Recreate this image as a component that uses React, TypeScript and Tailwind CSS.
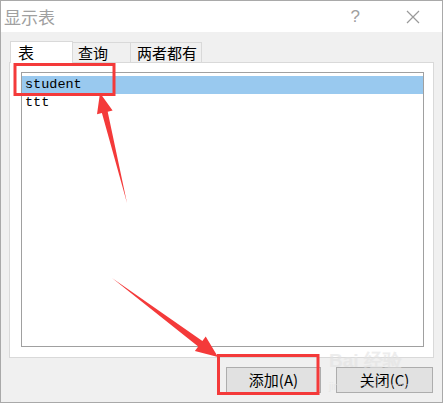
export default function App() {
  const cjk = { fontFamily: '"Noto Sans CJK SC", "Noto Sans", sans-serif' };
  return (
    <div className="relative w-[443px] h-[403px] bg-[#f0f0f0] border border-[#a9a9a9] flex flex-col overflow-hidden" style={cjk}>
      {/* title bar */}
      <div className="h-[31px] bg-white flex items-center pl-[3px] pr-[22px] shrink-0">
        <span className="text-[17px] text-[#a0a0a0] leading-none">显示表</span>
        <span className="ml-auto text-[17px] text-[#a0a0a0] leading-none" style={{ fontFamily: '"Liberation Sans", sans-serif' }}>?</span>
        <svg className="ml-[46px]" width="14" height="14" viewBox="0 0 14 14">
          <path d="M1 1 L13 13 M13 1 L1 13" stroke="#9a9a9a" strokeWidth="1.2" />
        </svg>
      </div>

      {/* tabs */}
      <div className="flex items-end pl-[9px] pt-[9px] shrink-0 whitespace-nowrap">
        <div className="w-[63px] h-[22px] bg-white border border-b-0 border-[#d9d9d9] pl-[7px] text-[16px] leading-[20px] text-black relative -mb-px z-10">表</div>
        <div className="w-[58px] h-[20px] border border-b-0 border-l-0 border-[#d9d9d9] pl-[5px] text-[15px] leading-[19px] text-black">查询</div>
        <div className="w-[71px] h-[20px] border border-b-0 border-l-0 border-[#d9d9d9] pl-[6px] text-[15px] leading-[19px] text-black">两者都有</div>
      </div>

      {/* tab panel */}
      <div className="mx-[8px] h-[296px] bg-white border border-[#d9d9d9] pl-[11px] pr-[9px] pt-[9px] pb-[10px] flex shrink-0">
        <div className="flex-1 border border-[#a0a0a0] pt-[3px]" style={{ fontFamily: '"Liberation Mono", monospace' }}>
          <div className="h-[18px] bg-[#99c9ef] text-[13.5px] leading-[18px] text-black pl-[3px]">student</div>
          <div className="h-[18px] text-[13.5px] leading-[18px] text-black pl-[3px]">ttt</div>
        </div>
      </div>

      {/* buttons */}
      <div className="flex justify-end gap-[15px] pr-[9px] pt-[9px]">
        <button className="w-[95px] h-[26px] bg-[#e1e1e1] border border-[#adadad] text-[15px] text-black">添加(A)</button>
        <button className="w-[97px] h-[26px] bg-[#e1e1e1] border border-[#adadad] text-[15px] text-black">关闭(C)</button>
      </div>

      {/* watermark */}
      <div className="absolute left-[328px] top-[350px] flex flex-col items-start text-[#e2e2e2] opacity-60 pointer-events-none">
        <span className="text-[19px] font-bold leading-none" style={{ fontFamily: '"Liberation Sans", sans-serif' }}>Bai 经验</span>
        <span className="text-[10px] leading-none mt-[12px]" style={{ fontFamily: '"Liberation Sans", sans-serif' }}>jingyan.baidu.com</span>
      </div>

      {/* annotations */}
      <svg className="absolute left-[-1px] top-[-1px] pointer-events-none" width="443" height="403" viewBox="0 0 443 403">
        <rect x="15" y="64.5" width="99" height="30" fill="none" stroke="#f43a3a" strokeWidth="3" />
        <rect x="218.5" y="355.5" width="99.5" height="38" fill="none" stroke="#f43a3a" strokeWidth="3" />
        <polygon points="100,93 112.6,110.5 107.7,111.7 127,203 101.9,113.1 97,114.3" fill="#f43a3a" />
        <polygon points="218,357 205.7,336.6 202.4,341 112,278 198.2,346.6 194.9,351 " fill="#f43a3a" />
      </svg>
    </div>
  );
}
